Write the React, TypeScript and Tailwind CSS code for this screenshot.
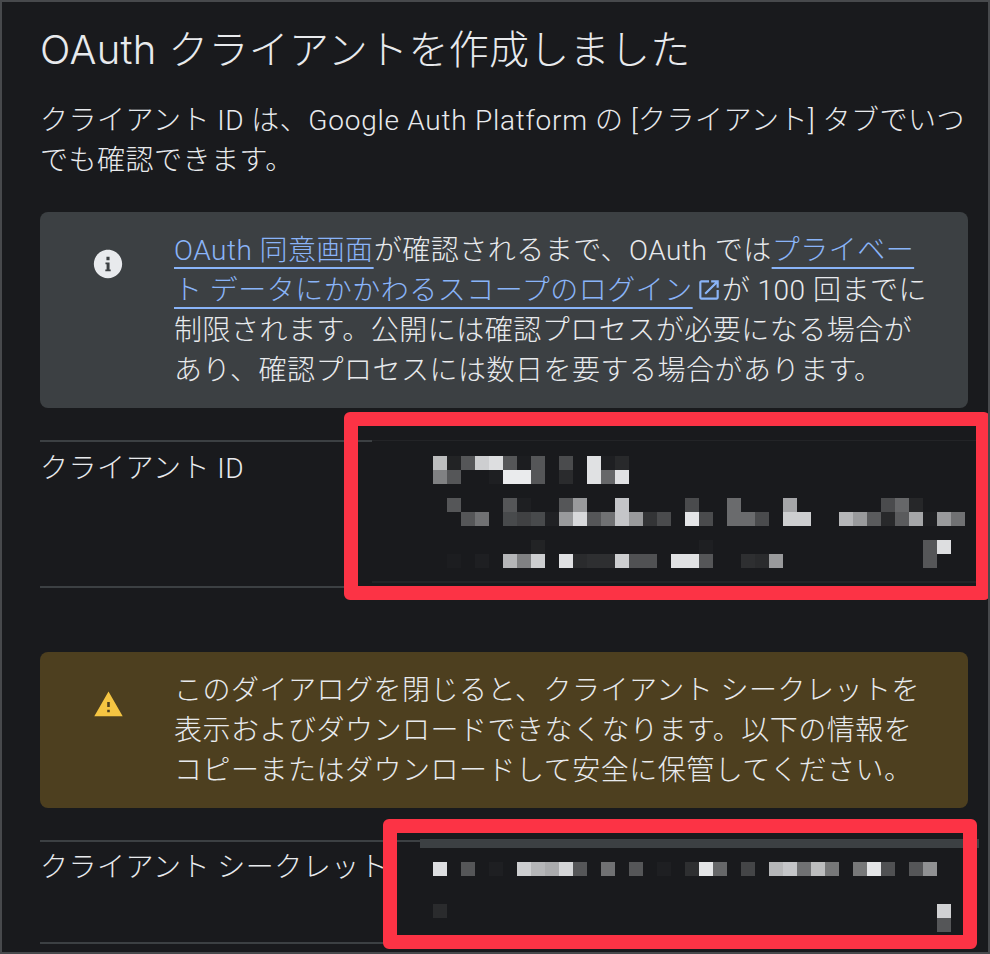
const clientIdCells: [number, [number, string][]][] = [
  [0, [[0, '#bcbdbe'], [1, '#222325'], [2, '#555658'], [3, '#cdced0'], [4, '#dddee0'], [5, '#555658'], [6, '#1c1d20'], [7, '#555658'], [9, '#4a4b4d'], [11, '#e0e1e3'], [12, '#1e1f22'], [13, '#28292b']]],
  [14, [[0, '#808183'], [1, '#555658'], [4, '#1e1f22'], [5, '#eaebed'], [6, '#eaebed'], [7, '#555658'], [9, '#2a2b2d'], [11, '#e0e1e3'], [12, '#666769'], [13, '#e0e1e3']]],
  [42, [[1, '#555658'], [5, '#555658'], [6, '#1e1f22'], [9, '#555658'], [10, '#999a9c'], [13, '#c4c5c8'], [18, '#4a4b4d'], [21, '#6a6b6d'], [25, '#a5a6a8'], [32, '#4a4b4d'], [33, '#666769'], [34, '#262729']]],
  [56, [[2, '#555658'], [3, '#707173'], [5, '#484a4c'], [6, '#404143'], [7, '#484a4c'], [8, '#202124'], [9, '#999a9c'], [10, '#d8d9db'], [11, '#555658'], [12, '#707173'], [13, '#c4c5c8'], [14, '#999a9c'], [15, '#333436'], [16, '#4a4b4d'], [18, '#e4e5e7'], [19, '#4a4b4d'], [21, '#6a6b6d'], [22, '#6a6b6d'], [23, '#4a4b4d'], [25, '#cdced0'], [26, '#cdced0'], [29, '#b5b6b8'], [30, '#999a9c'], [31, '#5a5b5d'], [32, '#28292b'], [33, '#5a5b5d'], [34, '#a5a6a8'], [35, '#1e1f22'], [36, '#999a9c'], [37, '#707173']]],
  [84, [[7, '#222325'], [19, '#1e1f22'], [35, '#555658'], [36, '#dddee0']]],
  [98, [[1, '#1c1d20'], [3, '#1e1f22'], [5, '#b5b6b8'], [6, '#808183'], [7, '#cdced0'], [9, '#e0e1e3'], [10, '#2a2b2d'], [11, '#2e2f31'], [12, '#2e2f31'], [13, '#cdced0'], [14, '#505153'], [15, '#505153'], [17, '#e0e1e3'], [18, '#e0e1e3'], [19, '#555658'], [22, '#2e2f31'], [23, '#2a2b2d'], [24, '#999a9c'], [35, '#555658']]],
];

const secretCells: [number, [number, string][]][] = [
  [0, [[0, '#dddee0'], [2, '#555658'], [4, '#1e1f22'], [6, '#cdced0'], [7, '#b5b6b8'], [8, '#aaabad'], [9, '#d4d5d7'], [10, '#555658'], [12, '#707173'], [14, '#555658'], [16, '#1e1f22'], [18, '#2e2f31'], [19, '#e4e5e7'], [20, '#666769'], [22, '#444547'], [24, '#b5b6b8'], [25, '#c4c5c8'], [26, '#707173'], [27, '#bcbdbe'], [28, '#777879'], [30, '#777879'], [31, '#e4e5e7'], [32, '#505153'], [34, '#555658'], [35, '#909193']]],
  [42, [[0, '#2a2b2d'], [36, '#d0d1d3']]],
  [56, [[36, '#555658']]],
];

function Mosaic({ rows, height }: { rows: [number, [number, string][]][]; height: number }) {
  return (
    <svg width="546" height={height} className="block" shapeRendering="crispEdges">
      {rows.map(([y, cells]) =>
        cells.map(([col, fill]) => (
          <rect key={`${y}-${col}`} x={col * 14} y={y} width="14" height="14" fill={fill} />
        )),
      )}
    </svg>
  );
}

function InfoIcon() {
  return (
    <svg viewBox="0 0 24 24" className="w-[34px] h-[34px] fill-[#e8eaed]">
      <path
        fillRule="evenodd"
        d="M12 2C6.48 2 2 6.48 2 12s4.48 10 10 10 10-4.48 10-10S17.52 2 12 2zm-1.1 4.9h2.2v2.4h-2.2V6.9zm-.7 4h2.9v5h.8v1.3h-3.8v-1.3h.9v-3.7h-.8v-1.3z"
      />
    </svg>
  );
}

function WarningIcon() {
  return (
    <svg viewBox="0 0 24 24" className="w-[31px] h-[31px] fill-[#f5c542]">
      <path d="M1 21h22L12 2 1 21zm12-3h-2v-2h2v2zm0-4h-2v-4h2v4z" />
    </svg>
  );
}

function ExternalIcon() {
  return (
    <svg viewBox="0 0 24 24" className="inline-block w-[26px] h-[26px] fill-[#8ab4f8] ml-[3px] align-[-3px]">
      <path d="M19 19H5V5h7V3H5c-1.11 0-2 .9-2 2v14c0 1.1.89 2 2 2h14c1.1 0 2-.9 2-2v-7h-2v7zM14 3v2h3.59l-9.83 9.83 1.41 1.41L19 6.41V10h2V3h-7z" />
    </svg>
  );
}

const linkClass =
  'text-[#8ab4f8] underline decoration-2 underline-offset-[7px] [text-decoration-skip-ink:none]';

export default function App() {
  return (
    <div className="relative w-[990px] h-[954px] overflow-hidden border-2 border-[#47494c] bg-[#191a1d] pl-[38px] pr-[20px] font-['Roboto','Noto_Sans_CJK_JP',sans-serif] text-[#e8eaed] text-[28px] leading-[40px] tracking-[0.5px] font-light">
      <h1 className="pt-[24px] font-['Inter','Noto_Sans_CJK_JP',sans-serif] text-[40px] leading-[48px] tracking-[0.3px] font-light whitespace-nowrap">
        OAuth クライアントを作成しました
      </h1>
      <p className="mt-[27px] mb-[-1px] whitespace-nowrap">
        クライアント ID は、<span className="tracking-[0.75px]">Google Auth Platform</span> の [クライアント] タブでいつ
        <br />
        でも確認できます。
      </p>

      <div className="mt-[32px] flex rounded-lg bg-[#3c4043] pt-[19px] pb-[17px] pr-[20px]">
        <div className="w-[134px] shrink-0 flex justify-center pl-[1px] pt-[16px]">
          <InfoIcon />
        </div>
        <div className="whitespace-nowrap">
          <span className={linkClass}>OAuth 同意画面</span>が確認されるまで、OAuth では<span className={linkClass}>プライベー</span>
          <br />
          <span className={linkClass}>ト データにかかわるスコープのログイン</span>
          <ExternalIcon />が 100 回までに
          <br />
          制限されます。公開には確認プロセスが必要になる場合が
          <br />
          あり、確認プロセスには数日を要する場合があります。
        </div>
      </div>

      <div className="mt-[32px] flex h-[148px] border-b-2 border-[#3c4043]">
        <div className="w-[332px] shrink-0 border-t-2 border-[#3c4043] pt-[7px]">クライアント ID</div>
        <div className="flex-1 h-[143px] border-t border-b-2 border-[#232427] pl-[61px] pt-[15px]">
          <Mosaic rows={clientIdCells} height={112} />
        </div>
      </div>

      <div className="mt-[64px] flex rounded-lg bg-[#4d3f1f] pt-[19px] pb-[17px] pr-[20px]">
        <div className="w-[134px] shrink-0 flex justify-center pl-[2px] pt-[18px]">
          <WarningIcon />
        </div>
        <div className="whitespace-nowrap">
          このダイアログを閉じると、クライアント シークレットを
          <br />
          表示およびダウンロードできなくなります。以下の情報を
          <br />
          コピーまたはダウンロードして安全に保管してください。
        </div>
      </div>

      <div className="mt-[32px] flex h-[104px] border-b-2 border-[#3c4043]">
        <div className="w-[380px] shrink-0 border-t-2 border-[#3c4043] pt-[6px] whitespace-nowrap">クライアント シークレット</div>
        <div className="flex-1">
          <div className="h-[9px] -mt-px bg-[#3c4043]" />
          <div className="pt-[14px] pl-[13px]">
            <Mosaic rows={secretCells} height={70} />
          </div>
        </div>
      </div>

      <div className="absolute left-[342px] top-[410px] w-[646px] h-[188px] rounded-[6px] border-[14px] border-[#fc3345]" />
      <div className="absolute left-[381px] top-[817px] w-[594px] h-[130px] rounded-[6px] border-[14px] border-[#fc3345]" />
    </div>
  );
}
